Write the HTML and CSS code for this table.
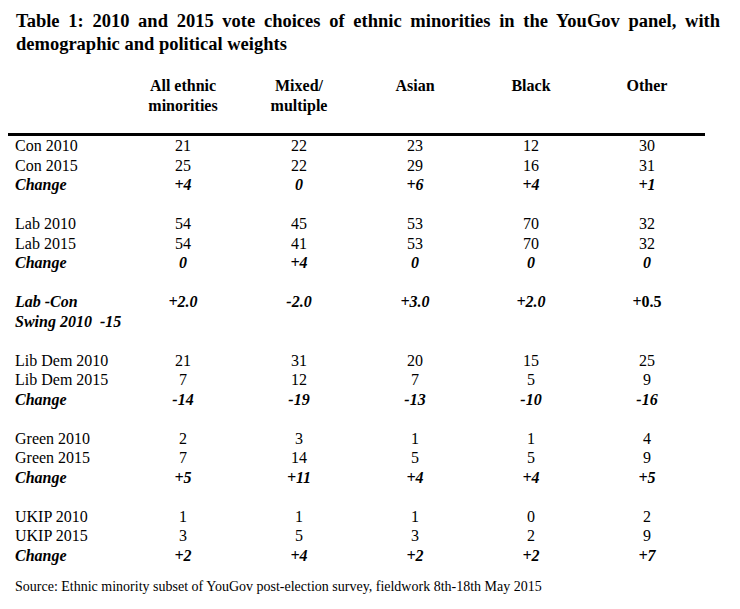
FILE: index.html
```html
<!DOCTYPE html>
<html>
<head>
<meta charset="utf-8">
<link rel="stylesheet" href="styles.css">
</head>
<body>
<div class="page">
  <h1 class="title"><span class="title-line full">Table 1: 2010 and 2015 vote choices of ethnic minorities in the YouGov panel, with</span> <span class="title-line">demographic and political weights</span></h1>
  <table class="votes">
    <colgroup>
      <col class="c-label"><col class="c-num"><col class="c-num"><col class="c-num"><col class="c-num"><col class="c-num">
    </colgroup>
    <thead>
      <tr class="head">
        <th></th>
        <th>All ethnic<br>minorities</th>
        <th>Mixed/<br>multiple</th>
        <th>Asian</th>
        <th>Black</th>
        <th>Other</th>
      </tr>
    </thead>
    <tbody>
      <tr><td class="lab">Con 2010</td><td>21</td><td>22</td><td>23</td><td>12</td><td>30</td></tr>
      <tr><td class="lab">Con 2015</td><td>25</td><td>22</td><td>29</td><td>16</td><td>31</td></tr>
      <tr class="chg"><td class="lab">Change</td><td>+4</td><td>0</td><td>+6</td><td>+4</td><td>+1</td></tr>
      <tr class="gap"><td colspan="6"></td></tr>
      <tr><td class="lab">Lab 2010</td><td>54</td><td>45</td><td>53</td><td>70</td><td>32</td></tr>
      <tr><td class="lab">Lab 2015</td><td>54</td><td>41</td><td>53</td><td>70</td><td>32</td></tr>
      <tr class="chg"><td class="lab">Change</td><td>0</td><td>+4</td><td>0</td><td>0</td><td>0</td></tr>
      <tr class="gap"><td colspan="6"></td></tr>
      <tr class="chg"><td class="lab">Lab -Con</td><td>+2.0</td><td>-2.0</td><td>+3.0</td><td>+2.0</td><td class="upright">+0.5</td></tr>
      <tr class="chg"><td class="lab">Swing 2010&nbsp; -15</td><td></td><td></td><td></td><td></td><td></td></tr>
      <tr class="gap"><td colspan="6"></td></tr>
      <tr><td class="lab">Lib Dem 2010</td><td>21</td><td>31</td><td>20</td><td>15</td><td>25</td></tr>
      <tr><td class="lab">Lib Dem 2015</td><td>7</td><td>12</td><td>7</td><td>5</td><td>9</td></tr>
      <tr class="chg"><td class="lab">Change</td><td>-14</td><td>-19</td><td>-13</td><td>-10</td><td>-16</td></tr>
      <tr class="gap"><td colspan="6"></td></tr>
      <tr><td class="lab">Green 2010</td><td>2</td><td>3</td><td>1</td><td>1</td><td>4</td></tr>
      <tr><td class="lab">Green 2015</td><td>7</td><td>14</td><td>5</td><td>5</td><td>9</td></tr>
      <tr class="chg"><td class="lab">Change</td><td>+5</td><td>+11</td><td>+4</td><td>+4</td><td>+5</td></tr>
      <tr class="gap"><td colspan="6"></td></tr>
      <tr><td class="lab">UKIP 2010</td><td>1</td><td>1</td><td>1</td><td>0</td><td>2</td></tr>
      <tr><td class="lab">UKIP 2015</td><td>3</td><td>5</td><td>3</td><td>2</td><td>9</td></tr>
      <tr class="chg"><td class="lab">Change</td><td>+2</td><td>+4</td><td>+2</td><td>+2</td><td>+7</td></tr>
    </tbody>
  </table>
  <p class="source">Source: Ethnic minority subset of YouGov post-election survey, fieldwork 8th-18th May 2015</p>
</div>
</body>
</html>
```

FILE: styles.css
```css
html, body {
  margin: 0;
  padding: 0;
  background: #fff;
}
body {
  font-family: "Liberation Serif", "DejaVu Serif", serif;
  color: #000;
}
.page {
  padding: 10px 0 0 8px;
}
.title {
  margin: 0 0 20px 8px;
  width: 704px;
  font-size: 18.5px;
  font-weight: bold;
  line-height: 23px;
}
.title-line {
  display: block;
}
.title-line.full {
  text-align: justify;
  text-align-last: justify;
}
.votes {
  border-collapse: collapse;
  table-layout: fixed;
  width: 697px;
  font-size: 16px;
}
.c-label { width: 117px; }
.c-num { width: 116px; }
.votes th,
.votes td {
  padding: 0;
  line-height: 19.5px;
  height: 19.5px;
  text-align: center;
  vertical-align: top;
  white-space: nowrap;
}
.head th {
  font-weight: bold;
  padding-bottom: 18px;
  border-bottom: 3px solid #000;
}
.votes td.lab {
  text-align: left;
  padding-left: 7px;
}
.chg td {
  font-weight: bold;
  font-style: italic;
}
.chg td.upright {
  font-style: normal;
}
.gap td {
  height: 19.5px;
}
.source {
  margin: 12px 0 0 7px;
  font-size: 14px;
  line-height: 19px;
}
```
